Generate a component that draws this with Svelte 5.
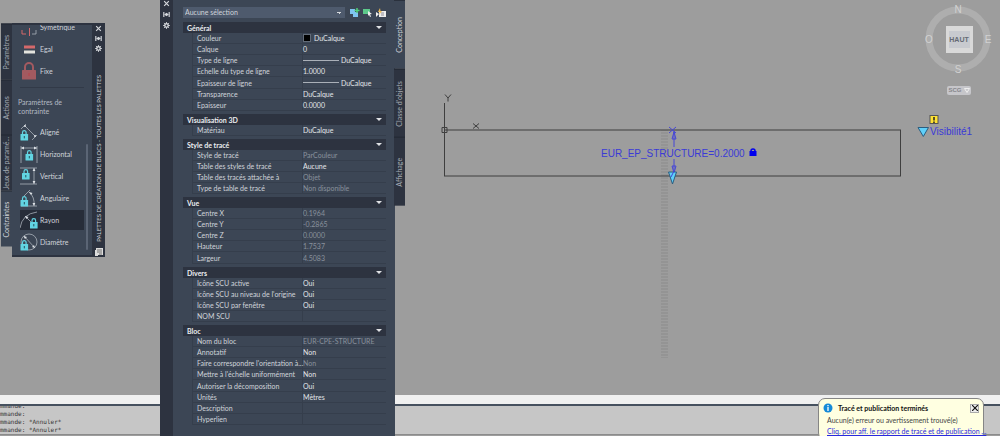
<script lang="ts">
  type Row = { label: string; value: string; muted?: boolean; line?: boolean; swatch?: boolean }
  type Section = { title: string; rows: Row[] }

  const row = (label: string, value = "", extra: Partial<Row> = {}): Row => ({ label, value, ...extra })
  const muted = { muted: true }

  const sections: Section[] = [
    {
      title: "Général",
      rows: [
        row("Couleur", "DuCalque", { swatch: true }),
        row("Calque", "0"),
        row("Type de ligne", "DuCalque", { line: true }),
        row("Echelle du type de ligne", "1.0000"),
        row("Epaisseur de ligne", "DuCalque", { line: true }),
        row("Transparence", "DuCalque"),
        row("Epaisseur", "0.0000"),
      ],
    },
    { title: "Visualisation 3D", rows: [row("Matériau", "DuCalque")] },
    {
      title: "Style de tracé",
      rows: [
        row("Style de tracé", "ParCouleur", muted),
        row("Table des styles de tracé", "Aucune"),
        row("Table des tracés attachée à", "Objet", muted),
        row("Type de table de tracé", "Non disponible", muted),
      ],
    },
    {
      title: "Vue",
      rows: [
        row("Centre X", "0.1964", muted),
        row("Centre Y", "-0.2865", muted),
        row("Centre Z", "0.0000", muted),
        row("Hauteur", "1.7537", muted),
        row("Largeur", "4.5083", muted),
      ],
    },
    {
      title: "Divers",
      rows: [
        row("Icône SCU active", "Oui"),
        row("Icône SCU au niveau de l'origine", "Oui"),
        row("Icône SCU par fenêtre", "Oui"),
        row("NOM SCU"),
      ],
    },
    {
      title: "Bloc",
      rows: [
        row("Nom du bloc", "EUR-CPE-STRUCTURE", muted),
        row("Annotatif", "Non"),
        row("Faire correspondre l'orientation à...", "Non", muted),
        row("Mettre à l'échelle uniformément", "Non"),
        row("Autoriser la décomposition", "Oui"),
        row("Unités", "Mètres"),
        row("Description"),
        row("Hyperlien"),
      ],
    },
  ]

  const paletteTabs = ["Paramètres", "Actions", "Jeux de paramé...", "Contraintes"]
  const propertyTabs = ["Conception", "Classe d'objets", "Affichage"]
  const geometric = ["Symétrique", "Egal", "Fixe"]
  const dimensional = ["Aligné", "Horizontal", "Vertical", "Angulaire", "Rayon", "Diamètre"]

  let closed = $state<string[]>([])
  let paletteTab = $state("Contraintes")
  let propertyTab = $state("Conception")
  let tool = $state("Rayon")
  let notice = $state(true)

  function toggle(title: string) {
    closed = closed.includes(title) ? closed.filter((t) => t !== title) : [...closed, title]
  }
</script>

{#snippet controls()}
  <button class="ctl" aria-label="Fermer">
    <svg viewBox="0 0 6 6"><path d="M1 1l4 4M5 1l-4 4" /></svg>
  </button>
  <button class="ctl" aria-label="Masquer automatiquement">
    <svg viewBox="0 0 6 6"><path d="M.7.8v4.4M5.3.8v4.4" /><path class="solid" d="M1 3l2-1.6v3.2zM5 3L3 1.4v3.2z" /></svg>
  </button>
  <button class="ctl" aria-label="Propriétés">
    <svg viewBox="0 0 6 6"><circle cx="3" cy="3" r="1.6" /><path class="thin" d="M3 0v6M0 3h6M.8.8l4.4 4.4M5.2.8L.8 5.2" /><circle class="hole" cx="3" cy="3" r=".8" /></svg>
  </button>
{/snippet}

{#snippet lock(x: number, y: number)}
  <path class="shackle" d="M{x + 2} {y + 4}V{y + 2.4}a1.8 1.8 0 0 1 3.6 0V{y + 4}" />
  <rect class="lock" x={x} y={y + 4} width="7.6" height="6.4" rx=".5" />
  <path class="keyhole" d="M{x + 3.8} {y + 6}v2.4" />
{/snippet}

{#snippet toolIcon(name: string)}
  <svg class="icon" viewBox="0 0 18 18" aria-hidden="true">
    {#if name === "Symétrique"}
      <path class="red" d="M2 12v4h4M9.500 10v8" /><path class="wire" d="M16 12v4h-4" />
    {:else if name === "Egal"}
      <path class="red bar" d="M4 7h11" /><path class="white bar" d="M4 12h11" />
    {:else if name === "Fixe"}
      <path class="big" d="M5 9V5a4 4 0 0 1 8 0v4" />
      <rect class="biglock" x="2" y="8" width="14" height="9.500" rx=".6" /><path class="mark" d="M9 11v3" />
    {:else if name === "Aligné"}
      <path class="wire" d="M1 6L6 1M12 17l5-5M5 3l10 10" /><circle class="dot" cx="5" cy="3" r="1" /><circle class="dot" cx="15" cy="13" r="1" />
      {@render lock(0.5, 7)}
    {:else if name === "Horizontal"}
      <path class="wire" d="M1 1v17M17 1v17M1 3h16" /><path class="dot" d="M1 3l3-1.400v2.800zM17 3l-3-1.400v2.800z" />
      {@render lock(5.5, 5)}
    {:else if name === "Vertical"}
      <path class="wire" d="M0 1h17M0 17h17M14 1v16" /><path class="dot" d="M14 1l-1.400 3h2.800zM14 17l-1.400-3h2.800z" />
      {@render lock(2, 2)}
    {:else if name === "Angulaire"}
      <path class="wire" d="M1 17h16M4 7l6-6M9 3q6 5 5 14" /><path class="dot" d="M9 3l3.500 1-1.500 2zM14 17l-1.500-3h2.800z" />
      {@render lock(0.5, 7)}
    {:else if name === "Rayon"}
      <path class="wire" d="M0 17Q2 3 17 1M5 5l8 8" /><path class="dot" d="M5 5l3.500 1-2 2z" />
      {@render lock(10, 7)}
    {:else}
      <circle class="wire" cx="9" cy="9" r="8" /><path class="wire" d="M4 3l11 12" /><path class="dot" d="M3.500 3l3.500 1-2 2zM15 15l-3-1 2-2z" />
      {@render lock(0.5, 7)}
    {/if}
  </svg>
{/snippet}

<main class="app">
  <section class="drawing" aria-label="Dessin">
    <svg class="sheet" aria-label="Bloc EUR-CPE-STRUCTURE">
      <defs>
        <pattern id="dashes" width="7" height="3" patternUnits="userSpaceOnUse">
          <rect width="7" height="2" fill="#949494" />
        </pattern>
      </defs>
      <rect x="661" y="130" width="7" height="228" fill="url(#dashes)" />
      <g class="ink">
        <rect x="444.500" y="130" width="456" height="46" />
        <path d="M444.500 103v27M442 127.500h5v5h-5z" />
        <path d="M445 94.500l3 3.500 3-3.500M448 98v3.500M473 123.500l6 5M479 123.500l-6 5" />
      </g>
      <g class="param">
        <path d="M669 127l7 6M676 127l-7 6M674 131v16M674 159v17M674 132l-2 7h4zM674 173l-2-7h4z" />
        <text x="601" y="156.500">EUR_EP_STRUCTURE=0.2000</text>
      </g>
      <path class="padlock" d="M751 152v-1a2 2 0 0 1 4 0v1" />
      <rect x="749.500" y="151" width="7" height="5" fill="#0000ee" />
      <path class="grip" d="M668.500 172h8l-4 12zM918 127.500h10.500l-5.200 9z" />
      <g class="param"><path d="M674 171l-3 6" /><text x="930" y="134.500">Visibilité1</text></g>
      <rect x="930" y="115.500" width="8" height="8" fill="#ffe233" stroke="#555" />
      <path d="M934 117v3.500M934 121.500v1.500" stroke="#222" stroke-width="1.500" />
    </svg>

    <div class="viewcube">
      <svg class="compass" viewBox="0 0 68 76">
        <circle cx="33" cy="39" r="29" />
        <text x="33" y="13">N</text><text x="4" y="43">O</text><text x="63" y="43">E</text><text x="33" y="73">S</text>
      </svg>
      <button class="face"><span>HAUT</span></button>
      <button class="ucs">SCG <svg viewBox="0 0 6 5"><path d="M.5.5h5L3 4.500z" /></svg></button>
    </div>
  </section>

  <div class="scroll"></div>
  <section class="command" aria-label="Ligne de commande">
    <p>mmande:</p>
    <p>mmande:</p>
    <p>mmande: *Annuler*</p>
    <p>mmande: *Annuler*</p>
  </section>

  <aside class="blocks" aria-label="Palettes de création de blocs">
    <nav class="tabs left">
      {#each paletteTabs as tab (tab)}
        <button class="tab" class:tab--on={tab === paletteTab} onclick={() => (paletteTab = tab)}>{tab}</button>
      {/each}
    </nav>
    <div class="blocks-body">
      <div class="tools">
        {#each geometric as name (name)}
          <button class="tool" class:tool--on={tool === name} onclick={() => (tool = name)}>{@render toolIcon(name)}{name}</button>
        {/each}
        <hr />
        <h2>Paramètres de<br />contrainte</h2>
        {#each dimensional as name (name)}
          <button class="tool" class:tool--on={tool === name} onclick={() => (tool = name)}>{@render toolIcon(name)}{name}</button>
        {/each}
      </div>
      <span class="thumb"></span>
    </div>
    <div class="strip">
      {@render controls()}
      <div class="strip-title">PALETTES DE CRÉATION DE BLOCS - TOUTES LES PALETTES</div>
      <svg class="strip-icon" viewBox="0 0 8 9"><path d="M1 1h7v7H3v1H0V3h1z" fill="#ddd" /><path d="M2 3h5M2 5h5M4 7h3" stroke="#444" stroke-width=".7" /></svg>
    </div>
  </aside>

  <aside class="props" aria-label="Propriétés">
    <div class="strip">{@render controls()}</div>
    <div class="props-body">
      <div class="picker">
        <select aria-label="Sélection"><option>Aucune sélection</option></select>
        <button class="pick" aria-label="Ajouter à la sélection">
          <svg viewBox="0 0 10 9"><path d="M0 1h5v5H0zM3 4h5v5H3z" fill="#7fc4ef" /><path d="M7 0v5M4.500 2.500h5" stroke="#4fd07a" stroke-width="1.500" /></svg>
        </button>
        <button class="pick" aria-label="Choix des objets">
          <svg viewBox="0 0 10 9"><path d="M0 1h7v5H0z" fill="#5cc98a" /><path d="M5 3l4 3-2 .3 1 2.200-1 .5-1-2.300L5 8z" fill="#eee" /></svg>
        </button>
        <button class="pick" aria-label="Sélection rapide">
          <svg viewBox="0 0 10 9"><path d="M3 3h7v6H3z" fill="#eee" /><path d="M5 5h3M5 7h3" stroke="#667" stroke-width=".7" /><path d="M4 0L2 4h2L3 7l3-4H4.500z" fill="#f0bd55" /><path d="M0 4l3 2-3 3z" fill="#eee" /></svg>
        </button>
      </div>
      <table>
        <colgroup><col class="c-indent" /><col class="c-label" /><col /></colgroup>
        {#each sections as section (section.title)}
          <tbody>
            <tr>
              <th class="group" colspan="3">
                <button onclick={() => toggle(section.title)}>{section.title}<span class="caret"></span></button>
              </th>
            </tr>
            {#if !closed.includes(section.title)}
              {#each section.rows as r (r.label)}
                <tr class="row">
                  <td class="indent"></td>
                  <th scope="row">{r.label}</th>
                  <td class:muted={r.muted}>
                    <div class="value">
                      {#if r.swatch}<span class="swatch"></span>{/if}
                      {#if r.line}<span class="line"></span>{/if}
                      {r.value}
                    </div>
                  </td>
                </tr>
              {/each}
            {/if}
          </tbody>
        {/each}
      </table>
    </div>
    <nav class="tabs right">
      {#each propertyTabs as tab (tab)}
        <button class="tab" class:tab--on={tab === propertyTab} onclick={() => (propertyTab = tab)}>{tab}</button>
      {/each}
    </nav>
  </aside>

  {#if notice}
    <div class="notice" role="status">
      <div class="notice-head">
        <svg viewBox="0 0 10 10"><circle cx="5" cy="5" r="4.500" fill="#168ad8" /><path d="M5 4v4M5 2v1.200" stroke="#fff" stroke-width="1.300" /></svg>
        <strong>Tracé et publication terminés</strong>
        <button aria-label="Fermer la notification" onclick={() => (notice = false)}>
          <svg viewBox="0 0 6 6"><path d="M0 0l6 6M6 0L0 6" stroke="#111" stroke-width="1.200" /></svg>
        </button>
      </div>
      <p>Aucun(e) erreur ou avertissement trouvé(e)</p>
      <a href="#rapport">Cliq. pour aff. le rapport de tracé et de publication ...</a>
    </div>
  {/if}
</main>

<style>
  :global(body) {
    overflow: hidden;
  }

  .app {
    --panel: #3c4655;
    --dark: #2d3340;
    --edge: #353e4c;
    --text: #d0d4da;
    position: relative;
    display: flex;
    flex-direction: column;
    height: 100vh;
    overflow: hidden;
    background: #9d9d9d;
    color: var(--text);
    font: 7px/10px Lato, "Open Sans", sans-serif;
  }

  button,
  select {
    margin: 0;
    padding: 0;
    border: 0;
    background: none;
    color: inherit;
    font: inherit;
  }

  h2,
  p {
    margin: 0;
    font: inherit;
  }

  svg {
    display: block;
    fill: none;
  }

  .drawing {
    position: relative;
    flex: 1;
    min-height: 0;
    overflow: hidden;
  }

  .sheet {
    width: 100%;
    height: 100%;
  }

  .ink {
    stroke: #3f3f3f;
  }

  .param {
    stroke: #4646d6;
  }

  .param text {
    font: 10px "Liberation Sans", Arial, sans-serif;
    fill: #3a3ad6;
    stroke: none;
  }

  .padlock {
    stroke: #0000ee;
    stroke-width: 1.5;
  }

  .grip {
    fill: #5fd0fa;
    stroke: #2b5d80;
  }

  .viewcube {
    position: absolute;
    top: 0;
    right: 5px;
    width: 72px;
    display: grid;
    justify-items: center;
  }

  .compass {
    grid-area: 1 / 1;
    width: 68px;
    height: 76px;
  }

  .compass circle {
    stroke: #aeaeae;
    stroke-width: 7;
  }

  .compass text {
    font: 10px "Liberation Sans", Arial, sans-serif;
    fill: #d2d2d2;
    text-anchor: middle;
  }

  .face {
    grid-area: 1 / 1;
    align-self: center;
    width: 27px;
    height: 27px;
    margin-top: 3px;
    background: #d9d9d9;
    color: #666b74;
    font: bold 7px/17px "Liberation Sans", Arial, sans-serif;
  }

  .face span {
    display: block;
    margin: 0 3px;
    background: #c8cacf;
  }

  .ucs {
    display: flex;
    align-items: center;
    gap: 2px;
    margin-top: 10px;
    padding: 0 1px;
    border-radius: 2px;
    background: #c6c6ca;
    color: #85858b;
    font: bold 6px/9px "Liberation Sans", Arial, sans-serif;
  }

  .ucs svg {
    width: 6px;
    height: 5px;
    stroke: #eee;
  }

  .scroll {
    height: 9px;
    border-bottom: 2px solid #46515f;
    background: #f0f0f0;
  }

  .command {
    height: 28px;
    margin-bottom: 1px;
    display: flex;
    flex-direction: column;
    justify-content: flex-end;
    overflow: hidden;
    border-bottom: 1px solid #8b8b8b;
    background: #c6c6c6;
    color: #333;
    font: 6px/8px "DejaVu Sans Mono", "Liberation Mono", monospace;
  }

  .command p {
    flex: none;
  }

  .blocks {
    position: absolute;
    top: 23px;
    left: 1px;
    display: flex;
    height: 234px;
  }

  .blocks-body {
    position: relative;
    width: 80px;
    overflow: hidden;
    border-top: 2px solid var(--dark);
    border-bottom: 2px solid var(--dark);
    background: var(--panel);
  }

  .tools {
    display: flex;
    flex-direction: column;
    margin-top: -8px;
    padding: 0 8px;
  }

  .tool {
    display: flex;
    align-items: center;
    gap: 2px;
    height: 20px;
    margin-bottom: 2px;
    text-align: left;
    white-space: nowrap;
  }

  .tool--on {
    background: #272d39;
  }

  .icon {
    width: 18px;
    height: 18px;
    flex: none;
  }

  .wire {
    stroke: #aab1ba;
    stroke-width: 0.8;
  }

  .dot {
    fill: #dfe3e8;
  }

  .lock {
    fill: #62d5e3;
  }

  .shackle {
    stroke: #62d5e3;
    stroke-width: 1.2;
  }

  .keyhole {
    stroke: #24505c;
  }

  .red {
    stroke: #d4696b;
  }

  .white {
    stroke: #e4e4de;
  }

  .bar {
    stroke-width: 3;
  }

  .big {
    stroke: #a35a60;
    stroke-width: 2;
  }

  .biglock {
    fill: #a35a60;
  }

  .mark {
    stroke: #b8434b;
  }

  .tools hr {
    width: 100%;
    margin: 4px 0 10px;
    border: 0;
    border-top: 1px solid #323a48;
  }

  .tools h2 {
    margin: 0 -4px 6px -2px;
    line-height: 9px;
    color: #b4bac3;
  }

  .thumb {
    position: absolute;
    top: 119px;
    right: 4px;
    width: 2px;
    height: 106px;
    border-radius: 1px;
    background: #5b6575;
  }

  .strip {
    display: flex;
    flex-direction: column;
    align-items: center;
    width: 13px;
    background: var(--dark);
  }

  .ctl {
    width: 7px;
    height: 7px;
    margin-bottom: 3px;
  }

  .ctl svg {
    width: 7px;
    height: 7px;
    stroke: #d5d8dc;
  }

  .ctl .solid {
    fill: #d5d8dc;
    stroke: none;
  }

  .ctl .thin {
    stroke-width: 0.7;
  }

  .ctl .hole {
    fill: var(--dark);
    stroke: none;
  }

  .blocks .strip {
    padding-top: 2px;
  }

  .strip-title {
    margin-top: auto;
    writing-mode: vertical-rl;
    transform: rotate(180deg);
    white-space: nowrap;
    font-size: 6px;
  }

  .strip-icon {
    flex: none;
    width: 8px;
    height: 9px;
    margin: 5px 0 1px;
  }

  .tabs {
    display: flex;
    flex-direction: column;
    width: 11px;
  }

  .tabs.left {
    height: 222px;
    margin-top: 1px;
  }

  .tabs.right {
    height: 206px;
  }

  .tab {
    flex: 1 1 0;
    min-height: 0;
    border-bottom: 1px solid #232832;
    background: var(--dark);
    color: #a4abb5;
    writing-mode: vertical-rl;
    transform: rotate(180deg);
    text-align: center;
    white-space: nowrap;
    overflow: hidden;
    line-height: 11px;
  }

  .tab--on {
    background: var(--panel);
    color: var(--text);
  }

  .props {
    position: absolute;
    top: 0;
    bottom: 0;
    left: 160px;
    display: flex;
  }

  .props .strip {
    gap: 1px;
  }

  .props-body {
    width: 203px;
    padding: 7px 9px 0 10px;
    background: var(--panel);
  }

  .props .tabs {
    margin-left: -1px;
  }

  .picker {
    display: flex;
    align-items: center;
    gap: 3px;
  }

  .picker select {
    flex: 1;
    height: 11px;
    margin-right: 2px;
    padding: 0 2px;
    appearance: none;
    background:
      conic-gradient(from -45deg at 50% 100%, #d5d8dc 90deg, transparent 0) right 4px center / 4px 2px no-repeat,
      #4e5a6d;
    line-height: 11px;
  }

  .pick svg {
    width: 10px;
    height: 9px;
  }

  table {
    width: 100%;
    margin-top: 1px;
    border-spacing: 0;
    table-layout: fixed;
  }

  .c-indent {
    width: 9px;
  }

  .c-label {
    width: 110px;
  }

  .group {
    height: 11px;
    padding: 3px 0 0;
  }

  .group button {
    display: flex;
    align-items: center;
    justify-content: space-between;
    width: 100%;
    height: 11px;
    padding: 0 4px;
    background: var(--dark);
    color: #eceef0;
    font-weight: 700;
  }

  .caret {
    border: 3px solid transparent;
    border-top: 3px solid #e0e2e5;
    border-bottom: 0;
  }

  .row td,
  .row th {
    height: 10px;
    padding: 0 0 0 4px;
    border-bottom: 1px solid var(--edge);
    border-left: 1px solid var(--edge);
    text-align: left;
    font-weight: 400;
    white-space: nowrap;
  }

  .row:nth-child(5n + 6) td,
  .row:nth-child(5n + 6) th {
    height: 11px;
  }

  .row .indent {
    border-color: transparent;
  }

  .row td {
    padding-left: 0;
    color: #e2e5e8;
  }

  .row .muted {
    color: #89919c;
  }

  .value {
    display: flex;
    align-items: center;
    height: 10px;
  }

  .swatch {
    width: 6px;
    height: 6px;
    margin-right: 3px;
    border: 1px solid #626b78;
    background: #000;
  }

  .line {
    width: 36px;
    margin-right: 2px;
    border-top: 1px solid #aab0b8;
  }

  .notice {
    position: absolute;
    right: 16px;
    bottom: -4px;
    width: 150px;
    padding: 4px 6px 3px 8px;
    border: 1px solid #858585;
    border-radius: 7px;
    background: #ffffe1;
    color: #444;
    white-space: nowrap;
  }

  .notice-head {
    display: flex;
    align-items: center;
    gap: 5px;
    margin: 0 -2px 2px -4px;
    color: #111;
  }

  .notice-head svg {
    width: 10px;
    height: 10px;
  }

  .notice-head button {
    display: grid;
    place-items: center;
    width: 9px;
    height: 9px;
    margin-left: auto;
    border: 1px solid #aaa;
    background: #eee;
  }

  .notice-head button svg {
    width: 6px;
    height: 6px;
  }

  .notice a {
    display: block;
    margin-top: 1px;
    color: #2929df;
  }
</style>
